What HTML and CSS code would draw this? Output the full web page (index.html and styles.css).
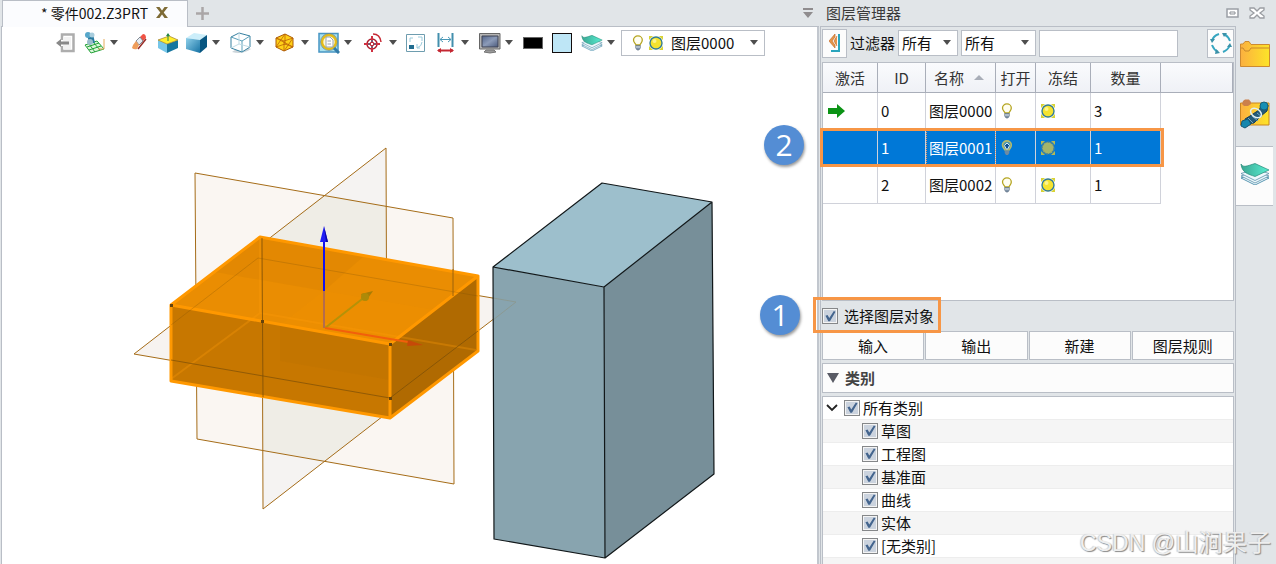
FILE: index.html
```html
<!DOCTYPE html>
<html lang="zh-CN">
<head>
<meta charset="utf-8">
<title>零件002.Z3PRT</title>
<link rel="stylesheet" href="styles.css">
</head>
<body>
<svg class="defs" aria-hidden="true">
  <defs>
    <linearGradient id="blueFace" x1="0" y1="0" x2="1" y2="1"><stop offset="0" stop-color="#8fd0ea"/><stop offset="1" stop-color="#1672a4"/></linearGradient>
    <linearGradient id="gold" x1="0" y1="0" x2="1" y2="0"><stop offset="0" stop-color="#fbb040"/><stop offset="1" stop-color="#fde428"/></linearGradient>
    <linearGradient id="mint" x1="0" y1="0" x2="1" y2="0"><stop offset="0" stop-color="#3aa692"/><stop offset="1" stop-color="#58efd2"/></linearGradient>
    <linearGradient id="screen" x1="0" y1="0" x2="1" y2="1"><stop offset="0" stop-color="#52648a"/><stop offset="0.5" stop-color="#8c9bb8"/><stop offset="1" stop-color="#4b5a7c"/></linearGradient>
    <symbol id="bulb" viewBox="0 0 12 16"><path d="M4 10C3.500 8.500 1.500 7.500 1.500 5A4.300 4 0 0 1 10.300 5C10.300 7.500 8.500 8.500 8 10Z" fill="#fffef0" stroke="#b5a521" stroke-width="1.300"/><path d="M3.700 10.500H8.300V13L7 15H5L3.700 13Z" fill="#7f93a8" stroke="#5a6b80" stroke-width=".6"/><path d="M4 12H8" stroke="#dfe7ee"/></symbol>
    <symbol id="bulb-off" viewBox="0 0 12 16"><path d="M4 10C3.500 8.500 1.500 7.500 1.500 5A4.300 4 0 0 1 10.300 5C10.300 7.500 8.500 8.500 8 10Z" fill="#4f95ad" stroke="#b4bb6c" stroke-width="1.600"/><path d="M6 3L8.500 5.500L6.800 9H5.200L3.500 5.500Z" fill="#0b4f94" stroke="#d5e8f0" stroke-width="1"/><path d="M3.700 10.500H8.300V13L7 15H5L3.700 13Z" fill="#6d8aa3"/></symbol>
    <symbol id="sun" viewBox="0 0 14 14"><path d="M0 0H4L0 4ZM10 0H14V4ZM0 10V14H4ZM14 10V14H10Z" fill="#d8d335"/><circle cx="7" cy="7" r="6" fill="#f5e32f" stroke="#347c91" stroke-width="1.400"/><circle cx="5.500" cy="5" r="2" fill="#fcf48c"/></symbol>
    <symbol id="sun-off" viewBox="0 0 14 14"><path d="M0 0H4L0 4ZM10 0H14V4ZM0 10V14H4ZM14 10V14H10Z" fill="#b4b954"/><circle cx="7" cy="7" r="6" fill="#a4b56b" stroke="#4e8393" stroke-width="1.400" stroke-dasharray="2 1"/></symbol>
    <symbol id="layers" viewBox="0 0 30 22"><path d="M1 15L15 10L29 15L15 22Z" fill="#eef8fc" stroke="#327f9f" stroke-width=".8"/><path d="M1 13L15 8L29 13L15 20Z" fill="#eef8fc" stroke="#5b91aa" stroke-width=".8"/><path d="M1 10.500L15 6L29 10.500L15 17.500Z" fill="#eef8fc" stroke="#5b91aa" stroke-width=".8"/><path d="M1 1C3 5 7 3 15 0.500L29 7L15 13.500C8 11 2 10 1 1Z" fill="url(#mint)" stroke="#248877" stroke-width=".7"/></symbol>
  </defs>
</svg>
<div class="app">
  <main class="workspace">
    <header class="tabs">
      <div class="tab"><span>* 零件002.Z3PRT</span>
        <button class="plain" aria-label="关闭"><svg width="12" height="11" viewBox="0 0 12 11"><path d="M0 0H3.500L6 3.500L8.500 0H12L7.700 5.500L12 11H8.500L6 7.500L3.500 11H0L4.300 5.500Z" fill="#7e6b35"/></svg></button>
      </div>
      <button class="plain add" aria-label="新建标签"><svg width="13" height="13" viewBox="0 0 13 13"><path d="M6.500 0V13M0 6.500H13" stroke="#aaa6a7" stroke-width="2.500"/></svg></button>
      <button class="plain more" aria-label="更多"><svg width="12" height="12" viewBox="0 0 12 12"><path d="M1 1H11V3H1ZM1 5H11L6 11Z" fill="#8f8c8e"/></svg></button>
    </header>
    <div class="toolbar">
      <button class="tool" aria-label="退出"><svg viewBox="0 0 22 22"><path d="M6 8V2.500H17.500V19H6V14" fill="none" stroke="#adadad" stroke-width="2.500"/><path d="M7 5H15V17H7" fill="#f2f2f2"/><path d="M0 11L5 7V9.500H13V12.500H5V15Z" fill="#888"/></svg></button>
      <button class="tool menu" aria-label="草图"><svg viewBox="0 0 22 22"><path d="M1 13L13 9L20 17L7 21Z" fill="#dbf6d9" stroke="#24a33a"/><path d="M3 15L15 11M5 18L17 14M5 12L11 20M9 10L16 18" stroke="#24a33a"/><path d="M20 7V17H14" stroke="#e6ac5c" fill="none"/><path d="M3 2L5 11H11L9 2Z" fill="#287aa0"/><circle cx="4" cy="3" r="3" fill="#57a7ca"/><circle cx="8" cy="3" r="2.500" fill="#a8cddd"/><circle cx="6" cy="10" r="3" fill="#9bbdcb"/></svg></button>
      <button class="tool" aria-label="擦除"><svg viewBox="0 0 22 22"><path d="M10 5L13 2Q16 2 16 6L13 9Z" fill="#f05345"/><path d="M6 9L10 5L13 9L9 13Z" fill="#e6ecf2" stroke="#56606b" stroke-width=".7"/><path d="M3 13L6 9L9 13L7 17Q4 18 2 16Z" fill="#ef9d5a"/><path d="M8 17L16 7" stroke="#962c27" stroke-width="1.500"/></svg></button>
      <button class="tool" aria-label="基准"><svg viewBox="0 0 22 22"><path d="M1 8L10 12V21L1 16Z" fill="#76c6e8"/><path d="M10 12L21 8V16L10 21Z" fill="#16769f"/><path d="M1 8L12 4L21 8L10 12Z" fill="#ffef2d" stroke="#9f7c28" stroke-width=".7"/><path d="M11 9V2" stroke="#278746"/><path d="M9 4L11 1L13 4Z" fill="#278746"/></svg></button>
      <button class="tool menu" aria-label="着色"><svg viewBox="0 0 22 22"><path d="M0 6L8 1L21 3L14 8Z" fill="#cceefa"/><path d="M0 6L14 8V21L0 17Z" fill="url(#blueFace)"/><path d="M14 8L21 3V15L14 21Z" fill="#075681"/></svg></button>
      <button class="tool menu" aria-label="线框"><svg viewBox="0 0 22 22"><path d="M2 20Q12 23 21 17L12 13Z" fill="#ccd5da"/><path d="M1 5L9 1L20 4V15L12 20L1 16Z" fill="#fff" stroke="#3680a0"/><path d="M1 5L12 9L20 4M12 9V20" stroke="#5b9fb9" fill="none"/><path d="M9 1V12M1 16L9 12L20 15" stroke="#bfdbe5" fill="none"/></svg></button>
      <button class="tool menu" aria-label="剖面"><svg viewBox="0 0 22 22"><path d="M1 6L10 2L18 6V15L9 19L1 15Z" fill="#ffd017" stroke="#ac5a06"/><path d="M1 6L9 9L18 6M9 9V19M10 2V13M1 15L10 12L18 15M1 6L18 15M9 19L18 6M1 15L10 2" stroke="#bb6309" fill="none" stroke-width=".8"/></svg></button>
      <button class="tool menu" aria-label="缩放"><svg viewBox="0 0 22 22"><path d="M1 1.500H20V20H1Z" fill="#a9e2ee" stroke="#4795c4" stroke-width="1.500"/><circle cx="11" cy="10" r="7" fill="#faf6db" stroke="#e4bc18" stroke-width="2.500"/><circle cx="11" cy="10" r="8.500" fill="none" stroke="#6b828c" stroke-width=".7"/><path d="M8 5H12L15 8V15H8Z" fill="#fff" stroke="#98a2ad"/><path d="M9.500 9H13M9.500 12H13" stroke="#98a2ad"/><path d="M16 16L21 21" stroke="#337ca8" stroke-width="3"/></svg></button>
      <button class="tool menu" aria-label="定向"><svg viewBox="0 0 22 22"><circle cx="9" cy="12" r="5" fill="none" stroke="#af1f2d" stroke-width="1.500"/><path d="M9 4V20M1 12H17" stroke="#cf3040" stroke-width="2"/><path d="M9 8V16M5 12H13" stroke="#277fa1"/><path d="M7.500 10.500H10.500V13.500H7.500Z" fill="#fff" stroke="#be2c3b"/><path d="M10 2Q17 2 18 10" fill="none" stroke="#c62a34" stroke-width="1.500"/></svg></button>
      <button class="tool" aria-label="窗口"><svg viewBox="0 0 22 22"><path d="M.5 2.500H18.500V19.500H.5Z" fill="#fff" stroke="#6e9daf"/><path d="M3 13H8V17H3Z" fill="#226d90"/><path d="M7 6H4V10M12 5H16V9M16 10Q16 14 11 16M11 12V16H14" fill="none" stroke="#9ccbdc"/></svg></button>
      <button class="tool menu" aria-label="标注"><svg viewBox="0 0 22 22"><path d="M3.500 1V15M17.500 1V15" stroke="#438fad" stroke-width="2"/><path d="M5 7.500H16M8 5L5 7.500L8 10M13 5L16 7.500L13 10" fill="none" stroke="#4b99b7"/><path d="M3 18.500H18" stroke="#c42732" stroke-width="2"/><path d="M2 18.500L6 16V21ZM19 18.500L15 16V21Z" fill="#c42732"/></svg></button>
      <button class="tool menu" aria-label="显示"><svg viewBox="0 0 22 22"><path d="M.5 1.500H21V17H.5Z" fill="#b5b5b5" stroke="#666"/><path d="M3 4H19V15H3Z" fill="url(#screen)" stroke="#3e4352"/><path d="M7 18H15L17 20Q11 22 5 20Z" fill="#999" stroke="#777"/></svg></button>
      <button class="tool" aria-label="线色"><span class="swatch line-color"></span></button>
      <button class="tool" aria-label="面色"><span class="swatch face-color"></span></button>
      <button class="tool menu" aria-label="图层"><svg><use href="#layers" y="3" width="22" height="16"/></svg></button>
      <div class="select layer-select"><svg width="12" height="16"><use href="#bulb"/></svg><svg width="14" height="14"><use href="#sun"/></svg><select aria-label="当前图层"><option>图层0000</option></select></div>
    </div>
    <svg class="scene" viewBox="2 58 815 506" preserveAspectRatio="xMinYMin meet" role="img" aria-label="三维模型">
      <path d="M195 173L453 218L454 484L197 439Z" fill="#faf6f2"/>
      <path d="M386 148L262 244L263 509L387 413Z" fill="#f5f3f2"/>
      <path d="M134 354L258 258L516 302L390 398Z" fill="#f7f3f0"/>
      <path d="M324 195L386 206V413L325 461L263 450L262 244Z" fill="#efede6"/>
      <g fill="none" stroke="#a56c18">
        <path d="M195 173L453 218L454 484L197 439Z"/><path d="M386 148L262 244L263 509L387 413Z"/><path d="M134 354L258 258L516 302L390 398Z"/>
      </g>
      <path d="M493 267L602 183L712 202L604 287Z" fill="#9dbfcc"/>
      <path d="M493 267L604 287L605 558L494 539Z" fill="#88a4af"/>
      <path d="M604 287L712 202L714 474L605 558Z" fill="#778f99"/>
      <path d="M493 298L516 302L493 320" fill="none" stroke="#8b9993"/>
      <path d="M493 267L602 183L712 202L604 287ZM493 267L494 539L605 558L604 287M712 202L714 474L605 558" fill="none" stroke="#111719" stroke-width="1.200" stroke-linejoin="round"/>
      <path d="M171 305L260 237L478 276L390 344Z" fill="#ea8d02"/>
      <path d="M171 305L390 344V418L171 381Z" fill="#c77700"/>
      <path d="M390 344L478 276V351L390 418Z" fill="#b06a01"/>
      <path d="M260 237L364 256L324 291L215 272Z" fill="#c97a04" opacity=".2"/>
      <path d="M324 291L434 310L390 344L282 324Z" fill="#ff9b00" opacity=".12"/>
      <path d="M280 324L390 344V380L280 361Z" fill="#b06a00" opacity=".12"/>
      <path d="M260 239V313L171 379M260 313L476 350" fill="none" stroke="#ff9b09" stroke-width="2" opacity=".3"/>
      <path d="M171 305L260 237L478 276L390 344ZM171 305V381L390 418V344M390 418L478 351V276" fill="none" stroke="#ff9800" stroke-width="3" stroke-linejoin="round"/>
      <g fill="none" stroke="#754b08">
        <path d="M171 360L390 398L478 331" opacity=".65"/><path d="M262 238V244L263 397" opacity=".75"/><path d="M171 325L258 258L478 296" opacity=".25"/>
      </g>
      <path d="M453 269V296" stroke="#9c620b"/>
      <path d="M324 328V291" stroke="#b46c4d" stroke-width="2"/><path d="M324 291V240" stroke="#1411ee" stroke-width="2"/>
      <path d="M324 226L320 242H328Z" fill="#201df5"/><path d="M324 226L326 242H328Z" fill="#0a07a5"/>
      <path d="M325 328L366 296" stroke="#b49208" stroke-width="2"/><path d="M373 291L361 294L366 301Z" fill="#a77d05"/><circle cx="365" cy="297" r="4" fill="#ad8a08"/>
      <path d="M325 328L408 342" stroke="#f25f0b" stroke-width="2"/><path d="M423 345L408 340L407 346Z" fill="#c64908"/>
      <g fill="#65420c"><path d="M170 304h3v3h-3zM389 343h3v3h-3zM261 320h3v3h-3zM389 397h3v3h-3z"/></g>
    </svg>
  </main>

  <aside class="dock">
    <header class="dock-title"><h1>图层管理器</h1>
      <button class="plain" aria-label="浮动"><svg width="13" height="10"><path d="M1 1H12V9H1Z" fill="#fff" stroke="#9b9fa5" stroke-width="1.500"/><path d="M4 4H9V6H4Z" fill="#fff" stroke="#8b8f95"/></svg></button>
      <button class="plain" aria-label="关闭面板"><svg width="16" height="12"><path d="M1 1H5L8 4L11 1H15V3L11 6L15 9V11H11L8 8L5 11H1V9L5 6L1 3Z" fill="#fff" stroke="#9a9da2" stroke-width="1.300"/></svg></button>
    </header>
    <div class="dock-body">
      <section class="panel">
        <div class="filters">
          <button class="square" aria-label="折叠"><svg width="12" height="20" viewBox="0 0 12 20"><path d="M6 1L0 8L6 15V12L3 8L6 4ZM8 3L5 8L8 13" fill="#e79549" stroke="#c6702f" stroke-width=".7"/><path d="M10 1V18H2" fill="none" stroke="#2ba5bd" stroke-width="2"/></svg></button>
          <label for="filter">过滤器</label>
          <div class="select small"><select id="filter"><option>所有</option></select></div>
          <div class="select wide"><select aria-label="条件"><option>所有</option></select></div>
          <input class="search" type="text" aria-label="搜索">
          <button class="square refresh" aria-label="刷新"><svg width="22" height="22" viewBox="0 0 22 22"><g fill="none" stroke="#36a6c0" stroke-width="2"><path d="M9 2Q3 4 2 9M2 13Q4 18 8 20M13 20Q18 18 20 13M20 9Q18 4 14 2"/></g><path d="M0 7H5L2 11ZM6 17L10 21L5 22ZM17 15L20 11L22 15ZM12 1H17L14 5Z" fill="#3b91a8"/></svg></button>
        </div>
        <div class="table-box">
          <table>
            <colgroup><col class="c-active"><col class="c-id"><col class="c-name"><col class="c-open"><col class="c-freeze"><col class="c-count"><col></colgroup>
            <thead><tr><th>激活</th><th>ID</th><th class="sorted">名称</th><th>打开</th><th>冻结</th><th>数量</th><th></th></tr></thead>
            <tbody>
              <tr><td><svg width="17" height="14"><path d="M0 4H9V0L17 7L9 14V10H0Z" fill="#0b9315"/></svg></td><td>0</td><td>图层0000</td><td><svg width="12" height="16"><use href="#bulb"/></svg></td><td><svg width="14" height="14"><use href="#sun"/></svg></td><td>3</td></tr>
              <tr class="selected"><td></td><td>1</td><td class="focus">图层0001</td><td><svg width="12" height="16"><use href="#bulb-off"/></svg></td><td><svg width="14" height="14"><use href="#sun-off"/></svg></td><td>1</td></tr>
              <tr><td></td><td>2</td><td>图层0002</td><td><svg width="12" height="16"><use href="#bulb"/></svg></td><td><svg width="14" height="14"><use href="#sun"/></svg></td><td>1</td></tr>
            </tbody>
          </table>
          <div class="mark mark-row"></div><span class="step step-two">2</span>
        </div>
        <div class="pick"><label><input type="checkbox" checked>选择图层对象</label>
          <div class="mark mark-pick"></div><span class="step step-one">1</span>
        </div>
        <div class="actions"><button>输入</button><button>输出</button><button>新建</button><button>图层规则</button></div>
        <h2 class="group"><svg width="12" height="10"><path d="M0 0H12L6 10Z" fill="#595b65"/></svg>类别</h2>
        <div class="tree">
          <div class="node root"><svg width="12" height="8"><path d="M1 1L6 6L11 1" fill="none" stroke="#222" stroke-width="1.800"/></svg><label><input type="checkbox" checked>所有类别</label></div>
          <div class="node"><label><input type="checkbox" checked>草图</label></div>
          <div class="node"><label><input type="checkbox" checked>工程图</label></div>
          <div class="node"><label><input type="checkbox" checked>基准面</label></div>
          <div class="node"><label><input type="checkbox" checked>曲线</label></div>
          <div class="node"><label><input type="checkbox" checked>实体</label></div>
          <div class="node"><label><input type="checkbox" checked>[无类别]</label></div>
        </div>
      </section>
      <nav class="rail">
        <button aria-label="文件夹"><svg width="30" height="26" viewBox="0 0 30 26"><path d="M.5 25.500V3H3L5 .5H9L11 3.500H29.500V25.500Z" fill="url(#gold)" stroke="#cd8a31"/><path d="M1 7H3L5 10H9L11 7H29" fill="none" stroke="#c9882d"/></svg></button>
        <button aria-label="标准件"><svg width="30" height="30" viewBox="0 0 30 30"><path d="M.5 26V4H29V26Z" fill="url(#gold)" stroke="#c98620"/><path d="M3 2L5 .5H9L11 3V5L8 7H4L2 5Z" fill="#cb804b"/><path d="M6 25L5 20L10 17L19 11L22 5L28 6L27 12L21 17L14 24Z" fill="#245a77" stroke="#173e57"/><path d="M8 19L13 24M12 17L18 22M17 14L22 18" stroke="#72a5bd"/><ellipse cx="16" cy="14" rx="6" ry="4" transform="rotate(35 16 14)" fill="none" stroke="#e0eff3" stroke-width="1.500"/><circle cx="24" cy="7" r="4" fill="#178fb4" stroke="#1a617c"/><path d="M2 22L8 20L11 25L5 29L1 27Z" fill="#1787ad" stroke="#155875"/></svg></button>
        <button class="current" aria-label="图层管理器"><svg width="30" height="22"><use href="#layers"/></svg></button>
      </nav>
    </div>
  </aside>
  <div class="credit"><span class="latin">CSDN @</span>山涧果子</div>
</div>
</body>
</html>
```
FILE: styles.css
```css
* { box-sizing: border-box; }
body { margin: 0; font: 15px/22px "Noto Sans CJK SC", "Noto Sans", sans-serif; color: #111; background: #e1e5e8; }
button, select, input { font: inherit; color: inherit; }
button { padding: 0; cursor: pointer; }
svg { display: block; flex: none; }
.defs { position: absolute; width: 0; height: 0; }
.plain { border: 0; background: none; }
.app { position: relative; display: flex; min-height: 100vh; overflow: hidden; }

.workspace { flex: 1; min-width: 0; display: flex; flex-direction: column; padding-left: 1px; }
.tabs { display: flex; align-items: center; height: 27px; border-bottom: 1px solid #b9bec6; padding-left: 1px; }
.tab { display: flex; align-items: center; gap: 8px; height: 27px; width: 186px; padding: 0 0 2px 38px; background: #fbfcfe; border: 1px solid #b9bec6; border-bottom: 0; font-size: 14px; white-space: nowrap; }
.add { margin-left: 8px; }
.more { margin: 0 5px 0 auto; }
.toolbar { display: grid; grid-template-columns: 28px 46px 27px 29px 44px 45px 43px 45px 43px 29px 44px 44px 29px 29px 40px 144px; align-items: center; height: 31px; padding-left: 54px; background: #fff; border-left: 1px solid #b9bec6; border-right: 2px solid #c2c7ce; }
.tool { display: flex; align-items: center; gap: 4px; border: 0; background: none; justify-self: start; }
.tool svg { width: 22px; height: 22px; }
.menu::after, .select::after { content: ""; border: 4px solid transparent; border-top: 5px solid #4e4e4e; border-bottom: 0; }
.swatch { width: 20px; height: 20px; border: 1px solid #120c0c; }
.line-color { height: 12px; background: #000; border: 1px solid #666; }
.face-color { background: #bee6f6; }
.scene { width: 100%; flex: 1; min-height: 0; background: #fff; border-left: 1px solid #b9bec6; border-right: 2px solid #c2c7ce; }

.select { display: flex; align-items: center; height: 26px; background: #fff; border: 1px solid #b9bec6; position: relative; }
.select::after { position: absolute; right: 6px; top: 9px; pointer-events: none; }
.select select { appearance: none; flex: 1; min-width: 0; width: 100%; height: 24px; padding: 0 0 0 3px; border: 0; background: none; }
.layer-select { gap: 5px; padding-left: 10px; }

.dock { width: 457px; flex: none; display: flex; flex-direction: column; }
.dock-title { display: flex; align-items: center; gap: 10px; height: 26px; padding: 0 11px 0 7px; }
.dock-title h1 { flex: 1; margin: 0; font-size: 15px; font-weight: 400; color: #3a3a3a; }
.dock-body { flex: 1; display: flex; }
.panel { flex: 1; min-width: 0; display: flex; flex-direction: column; margin-left: 1px; padding: 0 1px; border: 1px solid #b9bec6; border-width: 1px 1px 0; }
.filters { display: flex; align-items: center; height: 35px; padding-bottom: 3px; }
.filters label { margin: 0 3px; white-space: nowrap; }
.square { display: flex; align-items: center; justify-content: center; flex: none; width: 25px; height: 29px; border: 1px solid #b9bec6; background: #fcfcfc; }
.refresh { width: 27px; margin-left: auto; }
.small { width: 60px; }
.wide { width: 75px; margin: 0 3px; }
.search { width: 139px; height: 27px; border: 1px solid #b9bec6; background: #fff; }

.table-box { position: relative; height: 239px; background: #fff; border: 1px solid #b9bec6; }
table { width: 100%; table-layout: fixed; border-spacing: 0; }
.c-active { width: 55px; } .c-id { width: 48px; } .c-name { width: 70px; } .c-open { width: 40px; } .c-freeze { width: 55px; } .c-count { width: 70px; }
th { height: 30px; padding: 0; font-weight: 400; color: #333; background: linear-gradient(#fafbfd, #eff1f6); border-right: 1px solid #a9aeb9; border-bottom: 1px solid #a9aeb9; }
.sorted { text-align: left; padding-left: 8px; }
.sorted::after { content: ""; float: right; margin: 8px 11px 0 0; border: 5px solid transparent; border-top: 0; border-bottom-color: #a9aeb8; }
td { height: 37px; padding: 0 0 0 3px; white-space: nowrap; border-right: 1px solid #d0d2da; border-bottom: 1px solid #d0d2da; }
td svg { margin-left: 2px; }
.selected td { background: #0078d7; color: #fff; }
.selected .focus { outline: 1px dotted #e79a69; outline-offset: -1px; }

.mark { position: absolute; border: 3px solid #f79646; pointer-events: none; }
.mark-row { left: -3px; top: 65px; width: 344px; height: 39px; }
.mark-pick { left: -9px; top: -4px; width: 128px; height: 36px; }
.step { position: absolute; width: 40px; height: 40px; border-radius: 50%; background: #548dd4; box-shadow: 1px 2px 3px #0006; color: #fff; font: 30px/40px "Open Sans", sans-serif; text-align: center; }
.step-two { left: -59px; top: 62px; }
.step-one { left: -62px; top: -6px; }

.pick { position: relative; display: flex; align-items: center; height: 30px; }
label { display: flex; align-items: center; }
.pick label { gap: 6px; }
input[type="checkbox"] { appearance: none; width: 16px; height: 16px; margin: 0; padding: 1px; background: #cbd3de; border: 1px solid #858789; box-shadow: inset 0 0 0 1px #f4f4f4; }
input[type="checkbox"]:checked::before { content: ""; display: block; width: 12px; height: 12px; background: #44658e; clip-path: polygon(12% 48%, 30% 42%, 44% 66%, 82% 8%, 96% 14%, 50% 94%, 36% 94%); }

.actions { display: grid; grid-template-columns: repeat(4, 1fr); gap: 1px; }
.actions button { height: 29px; border: 1px solid #b9bec6; background: #fcfcfc; }
.group { display: flex; align-items: center; gap: 6px; height: 30px; margin: 3px 0; padding-left: 4px; border: 1px solid #b9bec6; background: #fcfcfc; font-size: 15px; font-weight: 700; color: #444; }
.tree { flex: 1; border: 1px solid #b9bec6; border-bottom: 0; background: repeating-linear-gradient(#fff 0 22px, #ededed 22px 23px, #f5f5f5 23px 45px, #ededed 45px 46px); }
.node { display: flex; align-items: center; height: 23px; padding: 0 0 2px 39px; }
.node label { gap: 3px; }
.root { gap: 6px; padding-left: 3px; }

.rail { width: 40px; display: flex; flex-direction: column; }
.rail button { display: flex; align-items: center; justify-content: center; height: 60px; margin-right: 3px; padding-bottom: 4px; border: 0; background: none; }
.rail .current { background: #fcfcfc; border: 1px solid #b9bec6; border-width: 1px 0; }

.credit { position: absolute; right: 5px; bottom: 3px; font-size: 24px; line-height: 36px; color: #eee; text-shadow: 1px 1px 1px #888, -1px 0 1px #ccc; pointer-events: none; }
.latin { font-family: "Liberation Sans", sans-serif; font-size: 23px; }
```
